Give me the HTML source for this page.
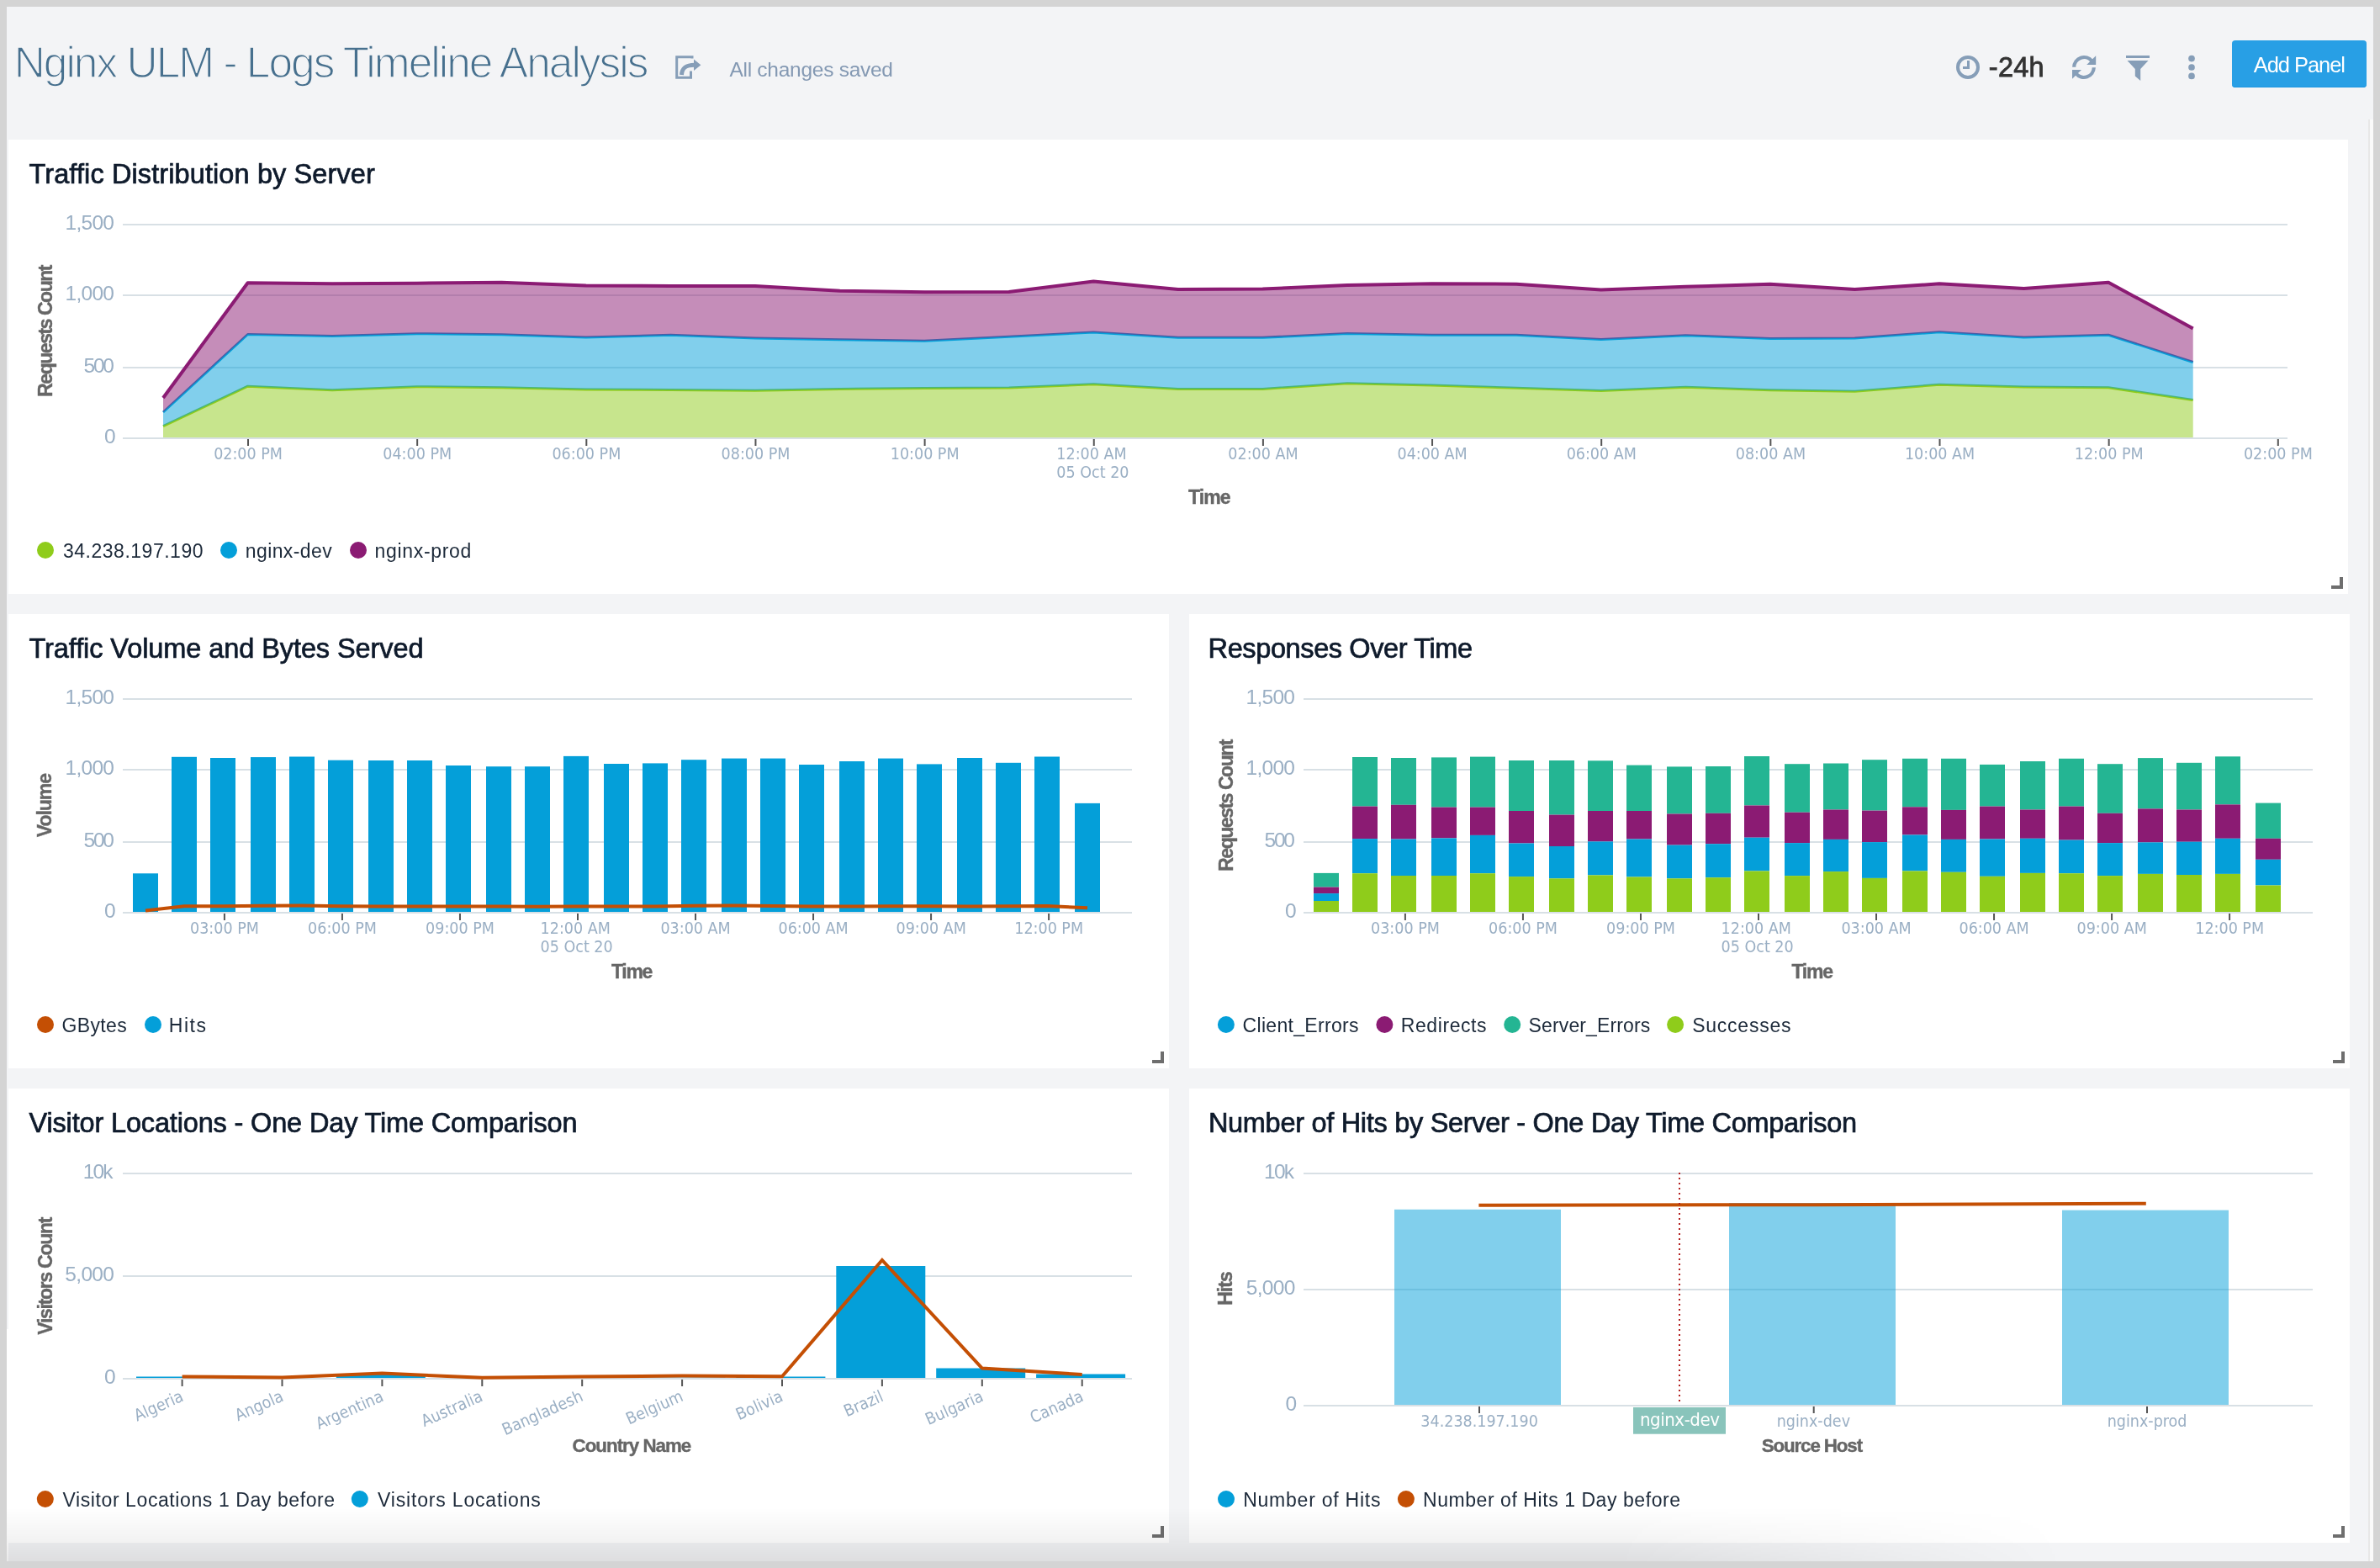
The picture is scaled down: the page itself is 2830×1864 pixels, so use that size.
<!DOCTYPE html>
<html lang="en"><head><meta charset="utf-8"><title>Nginx ULM - Logs Timeline Analysis</title>
<style>
html,body{margin:0;padding:0}
body{width:2830px;height:1864px;background:#d4d4d4;position:relative;overflow:hidden;font-family:"Liberation Sans", sans-serif}
#page{position:absolute;left:8px;top:8px;width:2814px;height:1848px;background:#f3f4f6}
.panel{position:absolute;background:#fff}
.rs{position:absolute;right:6px;bottom:6px;width:10px;height:10px;border-right:4px solid #6e6e6e;border-bottom:4px solid #6e6e6e}
.t{position:absolute;white-space:nowrap;line-height:1;display:block;font-variant-ligatures:none}
.d{font-family:"DejaVu Sans Condensed","DejaVu Sans","Liberation Sans",sans-serif;font-stretch:condensed}
#txt{position:absolute;left:0;top:0;width:2830px;height:1864px;will-change:transform}
#btn{position:absolute;left:2654px;top:48px;width:160px;height:56px;border-radius:4px;background:#289fe5;box-shadow:inset 0 -1px 0 #1d96e1}
#sb{position:absolute;left:2816px;top:142px;width:6px;height:1714px;background:#fafafa;border-left:2px solid #e8e8e8;box-sizing:border-box}
#fade{position:absolute;left:8px;top:1792px;width:2814px;height:64px;background:linear-gradient(to bottom,rgba(0,0,0,0) 0,rgba(0,0,0,.05) 42px,rgba(0,0,0,.085) 64px);-webkit-mask-image:linear-gradient(to right,#000 0,#000 68%,transparent 87%);mask-image:linear-gradient(to right,#000 0,#000 68%,transparent 87%);pointer-events:none}
#strip{position:absolute;left:8px;top:1580px;width:2px;height:276px;background:#fff}
svg{position:absolute;left:0;top:0}
</style></head><body>
<div id="page"></div>
<div id="strip"></div>
<div class="panel" style="left:10px;top:166px;width:2782px;height:540px"><i class="rs"></i></div><div class="panel" style="left:10px;top:730px;width:1380px;height:540px"><i class="rs"></i></div><div class="panel" style="left:1414px;top:730px;width:1380px;height:540px"><i class="rs"></i></div><div class="panel" style="left:10px;top:1294px;width:1380px;height:540px"><i class="rs"></i></div><div class="panel" style="left:1414px;top:1294px;width:1380px;height:540px"><i class="rs"></i></div>
<div id="sb"></div>
<div id="btn"></div>
<svg width="2830" height="1864" viewBox="0 0 2830 1864">
<rect x="146.00" y="266.00" width="2574.00" height="2.00" fill="#d8e0e5" />
<rect x="146.00" y="350.00" width="2574.00" height="2.00" fill="#d8e0e5" />
<rect x="146.00" y="436.00" width="2574.00" height="2.00" fill="#d8e0e5" />
<rect x="146.00" y="520.00" width="2574.00" height="2.00" fill="#d8e0e5" />
<polygon points="194.0,506.6 294.6,459.2 395.1,463.8 495.7,459.7 596.3,460.7 696.8,463.0 797.4,463.5 898.0,464.3 998.6,462.5 1099.1,461.5 1199.7,461.0 1300.3,456.8 1400.8,462.5 1501.4,462.5 1602.0,455.7 1702.5,458.0 1803.1,461.3 1903.7,464.6 2004.3,460.2 2104.8,463.8 2205.4,465.3 2306.0,457.2 2406.5,460.0 2507.1,460.7 2607.7,475.6 2607.7,520.0 2507.1,520.0 2406.5,520.0 2306.0,520.0 2205.4,520.0 2104.8,520.0 2004.3,520.0 1903.7,520.0 1803.1,520.0 1702.5,520.0 1602.0,520.0 1501.4,520.0 1400.8,520.0 1300.3,520.0 1199.7,520.0 1099.1,520.0 998.6,520.0 898.0,520.0 797.4,520.0 696.8,520.0 596.3,520.0 495.7,520.0 395.1,520.0 294.6,520.0 194.0,520.0" fill="#8fcc1b" fill-opacity="0.5"/>
<polyline points="194.0,506.6 294.6,459.2 395.1,463.8 495.7,459.7 596.3,460.7 696.8,463.0 797.4,463.5 898.0,464.3 998.6,462.5 1099.1,461.5 1199.7,461.0 1300.3,456.8 1400.8,462.5 1501.4,462.5 1602.0,455.7 1702.5,458.0 1803.1,461.3 1903.7,464.6 2004.3,460.2 2104.8,463.8 2205.4,465.3 2306.0,457.2 2406.5,460.0 2507.1,460.7 2607.7,475.6" fill="none" stroke="#8fcc1b" stroke-width="3" stroke-linejoin="round" />
<polygon points="194.0,490.0 294.6,397.5 395.1,399.5 495.7,396.7 596.3,397.7 696.8,401.0 797.4,398.2 898.0,402.0 998.6,403.8 1099.1,405.3 1199.7,400.2 1300.3,395.0 1400.8,401.3 1501.4,401.3 1602.0,396.5 1702.5,398.2 1803.1,398.2 1903.7,403.6 2004.3,398.7 2104.8,402.5 2205.4,402.0 2306.0,394.7 2406.5,401.0 2507.1,398.2 2607.7,430.5 2607.7,475.6 2507.1,460.7 2406.5,460.0 2306.0,457.2 2205.4,465.3 2104.8,463.8 2004.3,460.2 1903.7,464.6 1803.1,461.3 1702.5,458.0 1602.0,455.7 1501.4,462.5 1400.8,462.5 1300.3,456.8 1199.7,461.0 1099.1,461.5 998.6,462.5 898.0,464.3 797.4,463.5 696.8,463.0 596.3,460.7 495.7,459.7 395.1,463.8 294.6,459.2 194.0,506.6" fill="#049fd9" fill-opacity="0.5"/>
<polyline points="194.0,490.0 294.6,397.5 395.1,399.5 495.7,396.7 596.3,397.7 696.8,401.0 797.4,398.2 898.0,402.0 998.6,403.8 1099.1,405.3 1199.7,400.2 1300.3,395.0 1400.8,401.3 1501.4,401.3 1602.0,396.5 1702.5,398.2 1803.1,398.2 1903.7,403.6 2004.3,398.7 2104.8,402.5 2205.4,402.0 2306.0,394.7 2406.5,401.0 2507.1,398.2 2607.7,430.5" fill="none" stroke="#049fd9" stroke-width="3" stroke-linejoin="round" />
<polygon points="194.0,473.0 294.6,336.2 395.1,337.2 495.7,336.7 596.3,335.7 696.8,339.5 797.4,340.0 898.0,340.0 998.6,345.8 1099.1,347.3 1199.7,347.0 1300.3,334.5 1400.8,344.0 1501.4,343.5 1602.0,339.0 1702.5,337.2 1803.1,337.7 1903.7,344.6 2004.3,340.8 2104.8,337.7 2205.4,344.0 2306.0,337.3 2406.5,343.0 2507.1,335.7 2607.7,390.4 2607.7,430.5 2507.1,398.2 2406.5,401.0 2306.0,394.7 2205.4,402.0 2104.8,402.5 2004.3,398.7 1903.7,403.6 1803.1,398.2 1702.5,398.2 1602.0,396.5 1501.4,401.3 1400.8,401.3 1300.3,395.0 1199.7,400.2 1099.1,405.3 998.6,403.8 898.0,402.0 797.4,398.2 696.8,401.0 596.3,397.7 495.7,396.7 395.1,399.5 294.6,397.5 194.0,490.0" fill="#8b1b73" fill-opacity="0.5"/>
<polyline points="194.0,473.0 294.6,336.2 395.1,337.2 495.7,336.7 596.3,335.7 696.8,339.5 797.4,340.0 898.0,340.0 998.6,345.8 1099.1,347.3 1199.7,347.0 1300.3,334.5 1400.8,344.0 1501.4,343.5 1602.0,339.0 1702.5,337.2 1803.1,337.7 1903.7,344.6 2004.3,340.8 2104.8,337.7 2205.4,344.0 2306.0,337.3 2406.5,343.0 2507.1,335.7 2607.7,390.4" fill="none" stroke="#8b1b73" stroke-width="4" stroke-linejoin="round" />
<rect x="294.00" y="522.00" width="2.00" height="8.00" fill="#555" />
<rect x="495.15" y="522.00" width="2.00" height="8.00" fill="#555" />
<rect x="696.30" y="522.00" width="2.00" height="8.00" fill="#555" />
<rect x="897.45" y="522.00" width="2.00" height="8.00" fill="#555" />
<rect x="1098.60" y="522.00" width="2.00" height="8.00" fill="#555" />
<rect x="1299.75" y="522.00" width="2.00" height="8.00" fill="#555" />
<rect x="1500.90" y="522.00" width="2.00" height="8.00" fill="#555" />
<rect x="1702.05" y="522.00" width="2.00" height="8.00" fill="#555" />
<rect x="1903.20" y="522.00" width="2.00" height="8.00" fill="#555" />
<rect x="2104.35" y="522.00" width="2.00" height="8.00" fill="#555" />
<rect x="2305.50" y="522.00" width="2.00" height="8.00" fill="#555" />
<rect x="2506.65" y="522.00" width="2.00" height="8.00" fill="#555" />
<rect x="2707.80" y="522.00" width="2.00" height="8.00" fill="#555" />
<rect x="146.00" y="830.00" width="1200.00" height="2.00" fill="#d8e0e5" />
<rect x="146.00" y="914.00" width="1200.00" height="2.00" fill="#d8e0e5" />
<rect x="146.00" y="1000.00" width="1200.00" height="2.00" fill="#d8e0e5" />
<rect x="146.00" y="1084.00" width="1200.00" height="2.00" fill="#d8e0e5" />
<rect x="265.90" y="1086.00" width="2.00" height="8.00" fill="#555" />
<rect x="405.93" y="1086.00" width="2.00" height="8.00" fill="#555" />
<rect x="545.96" y="1086.00" width="2.00" height="8.00" fill="#555" />
<rect x="685.99" y="1086.00" width="2.00" height="8.00" fill="#555" />
<rect x="826.02" y="1086.00" width="2.00" height="8.00" fill="#555" />
<rect x="966.05" y="1086.00" width="2.00" height="8.00" fill="#555" />
<rect x="1106.08" y="1086.00" width="2.00" height="8.00" fill="#555" />
<rect x="1246.11" y="1086.00" width="2.00" height="8.00" fill="#555" />
<rect x="158.00" y="1038.30" width="30.00" height="45.70" fill="#049fd9" />
<rect x="204.00" y="899.80" width="30.00" height="184.20" fill="#049fd9" />
<rect x="250.00" y="901.00" width="30.00" height="183.00" fill="#049fd9" />
<rect x="298.00" y="900.10" width="30.00" height="183.90" fill="#049fd9" />
<rect x="344.00" y="899.50" width="30.00" height="184.50" fill="#049fd9" />
<rect x="390.00" y="903.70" width="30.00" height="180.30" fill="#049fd9" />
<rect x="438.00" y="904.00" width="30.00" height="180.00" fill="#049fd9" />
<rect x="484.00" y="904.00" width="30.00" height="180.00" fill="#049fd9" />
<rect x="530.00" y="910.00" width="30.00" height="174.00" fill="#049fd9" />
<rect x="578.00" y="911.20" width="30.00" height="172.80" fill="#049fd9" />
<rect x="624.00" y="911.20" width="30.00" height="172.80" fill="#049fd9" />
<rect x="670.00" y="898.90" width="30.00" height="185.10" fill="#049fd9" />
<rect x="718.00" y="908.00" width="30.00" height="176.00" fill="#049fd9" />
<rect x="764.00" y="907.40" width="30.00" height="176.60" fill="#049fd9" />
<rect x="810.00" y="903.20" width="30.00" height="180.80" fill="#049fd9" />
<rect x="858.00" y="901.60" width="30.00" height="182.40" fill="#049fd9" />
<rect x="904.00" y="901.60" width="30.00" height="182.40" fill="#049fd9" />
<rect x="950.00" y="909.00" width="30.00" height="175.00" fill="#049fd9" />
<rect x="998.00" y="905.00" width="30.00" height="179.00" fill="#049fd9" />
<rect x="1044.00" y="901.60" width="30.00" height="182.40" fill="#049fd9" />
<rect x="1090.00" y="908.40" width="30.00" height="175.60" fill="#049fd9" />
<rect x="1138.00" y="901.00" width="30.00" height="183.00" fill="#049fd9" />
<rect x="1184.00" y="906.80" width="30.00" height="177.20" fill="#049fd9" />
<rect x="1230.00" y="899.50" width="30.00" height="184.50" fill="#049fd9" />
<rect x="1278.00" y="954.90" width="30.00" height="129.10" fill="#049fd9" />
<polyline points="173.0,1082.4 219.0,1077.3 265.0,1077.3 313.0,1076.8 359.0,1076.6 405.0,1077.2 453.0,1077.5 499.0,1077.5 545.0,1077.6 593.0,1077.6 639.0,1077.8 685.0,1077.6 733.0,1077.6 779.0,1077.4 825.0,1076.8 873.0,1076.4 919.0,1077.0 965.0,1077.4 1013.0,1077.4 1059.0,1077.2 1105.0,1077.2 1153.0,1077.4 1199.0,1077.2 1245.0,1077.0 1293.0,1079.2" fill="none" stroke="#c44f04" stroke-width="4" stroke-linejoin="round" />
<rect x="1550.00" y="830.00" width="1200.00" height="2.00" fill="#d8e0e5" />
<rect x="1550.00" y="914.00" width="1200.00" height="2.00" fill="#d8e0e5" />
<rect x="1550.00" y="1000.00" width="1200.00" height="2.00" fill="#d8e0e5" />
<rect x="1550.00" y="1084.00" width="1200.00" height="2.00" fill="#d8e0e5" />
<rect x="1669.90" y="1086.00" width="2.00" height="8.00" fill="#555" />
<rect x="1809.93" y="1086.00" width="2.00" height="8.00" fill="#555" />
<rect x="1949.96" y="1086.00" width="2.00" height="8.00" fill="#555" />
<rect x="2089.99" y="1086.00" width="2.00" height="8.00" fill="#555" />
<rect x="2230.02" y="1086.00" width="2.00" height="8.00" fill="#555" />
<rect x="2370.05" y="1086.00" width="2.00" height="8.00" fill="#555" />
<rect x="2510.08" y="1086.00" width="2.00" height="8.00" fill="#555" />
<rect x="2650.11" y="1086.00" width="2.00" height="8.00" fill="#555" />
<rect x="1562.00" y="1037.90" width="30.00" height="16.70" fill="#24b593" />
<rect x="1562.00" y="1054.60" width="30.00" height="7.50" fill="#8b1b73" />
<rect x="1562.00" y="1062.10" width="30.00" height="8.90" fill="#049fd9" />
<rect x="1562.00" y="1071.00" width="30.00" height="13.00" fill="#8fcc1b" />
<rect x="1608.00" y="900.00" width="30.00" height="58.60" fill="#24b593" />
<rect x="1608.00" y="958.60" width="30.00" height="38.50" fill="#8b1b73" />
<rect x="1608.00" y="997.10" width="30.00" height="41.10" fill="#049fd9" />
<rect x="1608.00" y="1038.20" width="30.00" height="45.80" fill="#8fcc1b" />
<rect x="1654.00" y="901.00" width="30.00" height="55.80" fill="#24b593" />
<rect x="1654.00" y="956.80" width="30.00" height="40.70" fill="#8b1b73" />
<rect x="1654.00" y="997.50" width="30.00" height="43.50" fill="#049fd9" />
<rect x="1654.00" y="1041.00" width="30.00" height="43.00" fill="#8fcc1b" />
<rect x="1702.00" y="900.40" width="30.00" height="59.20" fill="#24b593" />
<rect x="1702.00" y="959.60" width="30.00" height="36.80" fill="#8b1b73" />
<rect x="1702.00" y="996.40" width="30.00" height="44.60" fill="#049fd9" />
<rect x="1702.00" y="1041.00" width="30.00" height="43.00" fill="#8fcc1b" />
<rect x="1748.00" y="899.60" width="30.00" height="60.00" fill="#24b593" />
<rect x="1748.00" y="959.60" width="30.00" height="33.30" fill="#8b1b73" />
<rect x="1748.00" y="992.90" width="30.00" height="45.30" fill="#049fd9" />
<rect x="1748.00" y="1038.20" width="30.00" height="45.80" fill="#8fcc1b" />
<rect x="1794.00" y="904.00" width="30.00" height="60.00" fill="#24b593" />
<rect x="1794.00" y="964.00" width="30.00" height="38.50" fill="#8b1b73" />
<rect x="1794.00" y="1002.50" width="30.00" height="39.60" fill="#049fd9" />
<rect x="1794.00" y="1042.10" width="30.00" height="41.90" fill="#8fcc1b" />
<rect x="1842.00" y="904.00" width="30.00" height="64.60" fill="#24b593" />
<rect x="1842.00" y="968.60" width="30.00" height="37.40" fill="#8b1b73" />
<rect x="1842.00" y="1006.00" width="30.00" height="38.30" fill="#049fd9" />
<rect x="1842.00" y="1044.30" width="30.00" height="39.70" fill="#8fcc1b" />
<rect x="1888.00" y="904.30" width="30.00" height="59.70" fill="#24b593" />
<rect x="1888.00" y="964.00" width="30.00" height="36.40" fill="#8b1b73" />
<rect x="1888.00" y="1000.40" width="30.00" height="40.00" fill="#049fd9" />
<rect x="1888.00" y="1040.40" width="30.00" height="43.60" fill="#8fcc1b" />
<rect x="1934.00" y="909.60" width="30.00" height="54.40" fill="#24b593" />
<rect x="1934.00" y="964.00" width="30.00" height="33.50" fill="#8b1b73" />
<rect x="1934.00" y="997.50" width="30.00" height="45.00" fill="#049fd9" />
<rect x="1934.00" y="1042.50" width="30.00" height="41.50" fill="#8fcc1b" />
<rect x="1982.00" y="911.40" width="30.00" height="56.10" fill="#24b593" />
<rect x="1982.00" y="967.50" width="30.00" height="37.10" fill="#8b1b73" />
<rect x="1982.00" y="1004.60" width="30.00" height="39.70" fill="#049fd9" />
<rect x="1982.00" y="1044.30" width="30.00" height="39.70" fill="#8fcc1b" />
<rect x="2028.00" y="911.00" width="30.00" height="55.80" fill="#24b593" />
<rect x="2028.00" y="966.80" width="30.00" height="36.40" fill="#8b1b73" />
<rect x="2028.00" y="1003.20" width="30.00" height="40.00" fill="#049fd9" />
<rect x="2028.00" y="1043.20" width="30.00" height="40.80" fill="#8fcc1b" />
<rect x="2074.00" y="899.00" width="30.00" height="58.50" fill="#24b593" />
<rect x="2074.00" y="957.50" width="30.00" height="38.20" fill="#8b1b73" />
<rect x="2074.00" y="995.70" width="30.00" height="39.70" fill="#049fd9" />
<rect x="2074.00" y="1035.40" width="30.00" height="48.60" fill="#8fcc1b" />
<rect x="2122.00" y="908.20" width="30.00" height="57.50" fill="#24b593" />
<rect x="2122.00" y="965.70" width="30.00" height="36.40" fill="#8b1b73" />
<rect x="2122.00" y="1002.10" width="30.00" height="39.00" fill="#049fd9" />
<rect x="2122.00" y="1041.10" width="30.00" height="42.90" fill="#8fcc1b" />
<rect x="2168.00" y="907.50" width="30.00" height="55.00" fill="#24b593" />
<rect x="2168.00" y="962.50" width="30.00" height="35.40" fill="#8b1b73" />
<rect x="2168.00" y="997.90" width="30.00" height="38.20" fill="#049fd9" />
<rect x="2168.00" y="1036.10" width="30.00" height="47.90" fill="#8fcc1b" />
<rect x="2214.00" y="903.20" width="30.00" height="60.40" fill="#24b593" />
<rect x="2214.00" y="963.60" width="30.00" height="37.50" fill="#8b1b73" />
<rect x="2214.00" y="1001.10" width="30.00" height="42.80" fill="#049fd9" />
<rect x="2214.00" y="1043.90" width="30.00" height="40.10" fill="#8fcc1b" />
<rect x="2262.00" y="901.80" width="30.00" height="57.50" fill="#24b593" />
<rect x="2262.00" y="959.30" width="30.00" height="33.20" fill="#8b1b73" />
<rect x="2262.00" y="992.50" width="30.00" height="42.90" fill="#049fd9" />
<rect x="2262.00" y="1035.40" width="30.00" height="48.60" fill="#8fcc1b" />
<rect x="2308.00" y="901.80" width="30.00" height="61.10" fill="#24b593" />
<rect x="2308.00" y="962.90" width="30.00" height="35.00" fill="#8b1b73" />
<rect x="2308.00" y="997.90" width="30.00" height="38.90" fill="#049fd9" />
<rect x="2308.00" y="1036.80" width="30.00" height="47.20" fill="#8fcc1b" />
<rect x="2354.00" y="908.90" width="30.00" height="49.70" fill="#24b593" />
<rect x="2354.00" y="958.60" width="30.00" height="38.90" fill="#8b1b73" />
<rect x="2354.00" y="997.50" width="30.00" height="44.30" fill="#049fd9" />
<rect x="2354.00" y="1041.80" width="30.00" height="42.20" fill="#8fcc1b" />
<rect x="2402.00" y="905.00" width="30.00" height="57.50" fill="#24b593" />
<rect x="2402.00" y="962.50" width="30.00" height="34.30" fill="#8b1b73" />
<rect x="2402.00" y="996.80" width="30.00" height="41.10" fill="#049fd9" />
<rect x="2402.00" y="1037.90" width="30.00" height="46.10" fill="#8fcc1b" />
<rect x="2448.00" y="901.80" width="30.00" height="56.80" fill="#24b593" />
<rect x="2448.00" y="958.60" width="30.00" height="40.00" fill="#8b1b73" />
<rect x="2448.00" y="998.60" width="30.00" height="39.60" fill="#049fd9" />
<rect x="2448.00" y="1038.20" width="30.00" height="45.80" fill="#8fcc1b" />
<rect x="2494.00" y="908.20" width="30.00" height="58.60" fill="#24b593" />
<rect x="2494.00" y="966.80" width="30.00" height="35.30" fill="#8b1b73" />
<rect x="2494.00" y="1002.10" width="30.00" height="39.00" fill="#049fd9" />
<rect x="2494.00" y="1041.10" width="30.00" height="42.90" fill="#8fcc1b" />
<rect x="2542.00" y="901.10" width="30.00" height="60.30" fill="#24b593" />
<rect x="2542.00" y="961.40" width="30.00" height="40.00" fill="#8b1b73" />
<rect x="2542.00" y="1001.40" width="30.00" height="37.50" fill="#049fd9" />
<rect x="2542.00" y="1038.90" width="30.00" height="45.10" fill="#8fcc1b" />
<rect x="2588.00" y="906.80" width="30.00" height="55.70" fill="#24b593" />
<rect x="2588.00" y="962.50" width="30.00" height="38.20" fill="#8b1b73" />
<rect x="2588.00" y="1000.70" width="30.00" height="39.30" fill="#049fd9" />
<rect x="2588.00" y="1040.00" width="30.00" height="44.00" fill="#8fcc1b" />
<rect x="2634.00" y="899.30" width="30.00" height="57.10" fill="#24b593" />
<rect x="2634.00" y="956.40" width="30.00" height="40.40" fill="#8b1b73" />
<rect x="2634.00" y="996.80" width="30.00" height="42.10" fill="#049fd9" />
<rect x="2634.00" y="1038.90" width="30.00" height="45.10" fill="#8fcc1b" />
<rect x="2682.00" y="954.60" width="30.00" height="42.20" fill="#24b593" />
<rect x="2682.00" y="996.80" width="30.00" height="25.00" fill="#8b1b73" />
<rect x="2682.00" y="1021.80" width="30.00" height="30.70" fill="#049fd9" />
<rect x="2682.00" y="1052.50" width="30.00" height="31.50" fill="#8fcc1b" />
<rect x="146.00" y="1394.00" width="1200.00" height="2.00" fill="#d8e0e5" />
<rect x="146.00" y="1516.00" width="1200.00" height="2.00" fill="#d8e0e5" />
<rect x="146.00" y="1638.00" width="1200.00" height="2.00" fill="#d8e0e5" />
<rect x="162.00" y="1636.50" width="106.00" height="1.50" fill="#049fd9" />
<rect x="399.80" y="1633.80" width="106.00" height="4.20" fill="#049fd9" />
<rect x="756.50" y="1637.60" width="106.00" height="0.40" fill="#049fd9" />
<rect x="875.40" y="1636.50" width="106.00" height="1.50" fill="#049fd9" />
<rect x="994.30" y="1505.00" width="106.00" height="133.00" fill="#049fd9" />
<rect x="1113.20" y="1626.50" width="106.00" height="11.50" fill="#049fd9" />
<rect x="1232.10" y="1633.50" width="106.00" height="4.50" fill="#049fd9" />
<polyline points="216.6,1636.6 335.5,1637.4 454.4,1632.6 573.3,1637.8 692.2,1636.6 811.1,1635.6 930.0,1636.2 1048.9,1498.0 1167.8,1626.5 1286.7,1634.0" fill="none" stroke="#c44f04" stroke-width="4" stroke-linejoin="miter"/>
<rect x="215.60" y="1640.00" width="2.00" height="8.00" fill="#555" />
<rect x="334.50" y="1640.00" width="2.00" height="8.00" fill="#555" />
<rect x="453.40" y="1640.00" width="2.00" height="8.00" fill="#555" />
<rect x="572.30" y="1640.00" width="2.00" height="8.00" fill="#555" />
<rect x="691.20" y="1640.00" width="2.00" height="8.00" fill="#555" />
<rect x="810.10" y="1640.00" width="2.00" height="8.00" fill="#555" />
<rect x="929.00" y="1640.00" width="2.00" height="8.00" fill="#555" />
<rect x="1047.90" y="1640.00" width="2.00" height="8.00" fill="#555" />
<rect x="1166.80" y="1640.00" width="2.00" height="8.00" fill="#555" />
<rect x="1285.70" y="1640.00" width="2.00" height="8.00" fill="#555" />
<rect x="1550.00" y="1394.00" width="1200.00" height="2.00" fill="#d8e0e5" />
<rect x="1550.00" y="1532.00" width="1200.00" height="2.00" fill="#d8e0e5" />
<rect x="1550.00" y="1670.00" width="1200.00" height="2.00" fill="#d8e0e5" />
<rect x="1658.00" y="1437.80" width="198.00" height="232.20" fill="#049fd9" fill-opacity="0.5"/>
<rect x="2056.00" y="1430.00" width="198.00" height="240.00" fill="#049fd9" fill-opacity="0.5"/>
<rect x="2452.00" y="1438.60" width="198.00" height="231.40" fill="#049fd9" fill-opacity="0.5"/>
<polyline points="1758.4,1432.7 2157,1432.2 2551.8,1430.7" fill="none" stroke="#c44f04" stroke-width="4"/>
<line x1="1997" y1="1394" x2="1997" y2="1667" stroke="#b3201f" stroke-width="2" stroke-dasharray="2 4"/>
<rect x="1758.00" y="1672.00" width="2.00" height="8.00" fill="#555" />
<rect x="2155.70" y="1672.00" width="2.00" height="8.00" fill="#555" />
<rect x="2552.00" y="1672.00" width="2.00" height="8.00" fill="#555" />
<rect x="1942.00" y="1673.00" width="110.00" height="31.70" fill="#89c4bb" />
<circle cx="54" cy="654" r="10" fill="#8fcc1b"/>
<circle cx="272" cy="654" r="10" fill="#049fd9"/>
<circle cx="426" cy="654" r="10" fill="#8b1b73"/>
<circle cx="54" cy="1218" r="10" fill="#c44f04"/>
<circle cx="182" cy="1218" r="10" fill="#049fd9"/>
<circle cx="1457.9" cy="1218" r="10" fill="#049fd9"/>
<circle cx="1646.4" cy="1218" r="10" fill="#8b1b73"/>
<circle cx="1798.2" cy="1218" r="10" fill="#24b593"/>
<circle cx="1992.1" cy="1218" r="10" fill="#8fcc1b"/>
<circle cx="53.8" cy="1782" r="10" fill="#c44f04"/>
<circle cx="427.8" cy="1782" r="10" fill="#049fd9"/>
<circle cx="1458" cy="1782" r="10" fill="#049fd9"/>
<circle cx="1671.9" cy="1782" r="10" fill="#c44f04"/>

<g fill="none" stroke="#869eb8" stroke-width="3">
<path d="M823,69.5 V67.7 H804.7 V92.3 H821.5 V84.5"/>
<path d="M810.5,89 C811,81 815,77.2 826,77.2" stroke-width="5"/>
</g>
<polygon points="825,70.4 833.4,77.2 825,84" fill="#869eb8"/>
<circle cx="2340" cy="80" r="12" fill="none" stroke="#869eb8" stroke-width="4"/>
<path d="M2340.5,72 V80.6 H2334" fill="none" stroke="#869eb8" stroke-width="3"/>
<g fill="none" stroke="#869eb8" stroke-width="4.2">
<path d="M2466.2,79.8 A11.9,11.9 0 0 1 2487.4,72.6"/>
<path d="M2489.8,80.2 A11.9,11.9 0 0 1 2468.6,87.4"/>
</g>
<polygon points="2492.2,66.2 2492.2,77 2481.2,77" fill="#869eb8"/>
<polygon points="2464,93.8 2464,83 2475,83" fill="#869eb8"/>
<rect x="2528" y="66" width="28" height="3" fill="#869eb8"/>
<polygon points="2529.5,72 2554.5,72 2545.2,82 2545.2,96 2538.8,90.6 2538.8,82" fill="#869eb8"/>
<circle cx="2606" cy="69.6" r="3.85" fill="#869eb8"/><circle cx="2606" cy="80" r="3.85" fill="#869eb8"/><circle cx="2606" cy="90.4" r="3.85" fill="#869eb8"/>

</svg>
<div id="txt">
<span class="t d" style="left:254.15px;top:529.72px;font-size:19.5px;color:#9aafc4;">02:00 PM</span>
<span class="t d" style="left:455.30px;top:529.72px;font-size:19.5px;color:#9aafc4;">04:00 PM</span>
<span class="t d" style="left:656.45px;top:529.72px;font-size:19.5px;color:#9aafc4;">06:00 PM</span>
<span class="t d" style="left:857.60px;top:529.72px;font-size:19.5px;color:#9aafc4;">08:00 PM</span>
<span class="t d" style="left:1058.75px;top:529.72px;font-size:19.5px;color:#9aafc4;">10:00 PM</span>
<span class="t d" style="left:1256.35px;top:529.72px;font-size:19.5px;color:#9aafc4;">12:00 AM</span>
<span class="t d" style="left:1256.35px;top:551.72px;font-size:19.5px;color:#9aafc4;">05 Oct 20</span>
<span class="t d" style="left:1460.34px;top:529.72px;font-size:19.5px;color:#9aafc4;">02:00 AM</span>
<span class="t d" style="left:1661.49px;top:529.72px;font-size:19.5px;color:#9aafc4;">04:00 AM</span>
<span class="t d" style="left:1862.64px;top:529.72px;font-size:19.5px;color:#9aafc4;">06:00 AM</span>
<span class="t d" style="left:2063.79px;top:529.72px;font-size:19.5px;color:#9aafc4;">08:00 AM</span>
<span class="t d" style="left:2264.94px;top:529.72px;font-size:19.5px;color:#9aafc4;">10:00 AM</span>
<span class="t d" style="left:2466.80px;top:529.72px;font-size:19.5px;color:#9aafc4;">12:00 PM</span>
<span class="t d" style="left:2667.95px;top:529.72px;font-size:19.5px;color:#9aafc4;">02:00 PM</span>
<span class="t" style="left:77.60px;top:253.16px;font-size:24.5px;color:#9aafc4;letter-spacing:-0.747px;">1,500</span>
<span class="t" style="left:77.60px;top:337.16px;font-size:24.5px;color:#9aafc4;letter-spacing:-0.747px;">1,000</span>
<span class="t" style="left:99.60px;top:423.16px;font-size:24.5px;color:#9aafc4;letter-spacing:-2.282px;">500</span>
<span class="t" style="left:124.10px;top:507.16px;font-size:24.5px;color:#9aafc4;">0</span>
<span class="t" style="left:-17.40px;top:373.23px;font-size:23px;color:#666666;font-weight:bold;letter-spacing:-1.468px;-webkit-text-stroke:0.4px #666666;transform-origin:79.30px 19.47px;transform:rotate(-90deg);">Requests Count</span>
<span class="t" style="left:1413.00px;top:579.83px;font-size:23px;color:#666666;font-weight:bold;letter-spacing:-0.930px;-webkit-text-stroke:0.4px #666666;">Time</span>
<span class="t" style="left:77.60px;top:817.16px;font-size:24.5px;color:#9aafc4;letter-spacing:-0.747px;">1,500</span>
<span class="t" style="left:77.60px;top:901.16px;font-size:24.5px;color:#9aafc4;letter-spacing:-0.747px;">1,000</span>
<span class="t" style="left:99.60px;top:987.16px;font-size:24.5px;color:#9aafc4;letter-spacing:-2.282px;">500</span>
<span class="t" style="left:124.10px;top:1071.16px;font-size:24.5px;color:#9aafc4;">0</span>
<span class="t d" style="left:226.05px;top:1093.72px;font-size:19.5px;color:#9aafc4;">03:00 PM</span>
<span class="t d" style="left:366.08px;top:1093.72px;font-size:19.5px;color:#9aafc4;">06:00 PM</span>
<span class="t d" style="left:506.11px;top:1093.72px;font-size:19.5px;color:#9aafc4;">09:00 PM</span>
<span class="t d" style="left:642.59px;top:1093.72px;font-size:19.5px;color:#9aafc4;">12:00 AM</span>
<span class="t d" style="left:642.59px;top:1115.72px;font-size:19.5px;color:#9aafc4;">05 Oct 20</span>
<span class="t d" style="left:785.46px;top:1093.72px;font-size:19.5px;color:#9aafc4;">03:00 AM</span>
<span class="t d" style="left:925.49px;top:1093.72px;font-size:19.5px;color:#9aafc4;">06:00 AM</span>
<span class="t d" style="left:1065.52px;top:1093.72px;font-size:19.5px;color:#9aafc4;">09:00 AM</span>
<span class="t d" style="left:1206.26px;top:1093.72px;font-size:19.5px;color:#9aafc4;">12:00 PM</span>
<span class="t" style="left:24.20px;top:937.63px;font-size:23px;color:#666666;font-weight:bold;letter-spacing:-1.037px;-webkit-text-stroke:0.4px #666666;transform-origin:37.70px 19.47px;transform:rotate(-90deg);">Volume</span>
<span class="t" style="left:727.00px;top:1143.83px;font-size:23px;color:#666666;font-weight:bold;letter-spacing:-1.297px;-webkit-text-stroke:0.4px #666666;">Time</span>
<span class="t" style="left:1481.60px;top:817.16px;font-size:24.5px;color:#9aafc4;letter-spacing:-0.747px;">1,500</span>
<span class="t" style="left:1481.60px;top:901.16px;font-size:24.5px;color:#9aafc4;letter-spacing:-0.747px;">1,000</span>
<span class="t" style="left:1503.60px;top:987.16px;font-size:24.5px;color:#9aafc4;letter-spacing:-2.282px;">500</span>
<span class="t" style="left:1528.10px;top:1071.16px;font-size:24.5px;color:#9aafc4;">0</span>
<span class="t d" style="left:1630.05px;top:1093.72px;font-size:19.5px;color:#9aafc4;">03:00 PM</span>
<span class="t d" style="left:1770.08px;top:1093.72px;font-size:19.5px;color:#9aafc4;">06:00 PM</span>
<span class="t d" style="left:1910.11px;top:1093.72px;font-size:19.5px;color:#9aafc4;">09:00 PM</span>
<span class="t d" style="left:2046.59px;top:1093.72px;font-size:19.5px;color:#9aafc4;">12:00 AM</span>
<span class="t d" style="left:2046.59px;top:1115.72px;font-size:19.5px;color:#9aafc4;">05 Oct 20</span>
<span class="t d" style="left:2189.46px;top:1093.72px;font-size:19.5px;color:#9aafc4;">03:00 AM</span>
<span class="t d" style="left:2329.49px;top:1093.72px;font-size:19.5px;color:#9aafc4;">06:00 AM</span>
<span class="t d" style="left:2469.52px;top:1093.72px;font-size:19.5px;color:#9aafc4;">09:00 AM</span>
<span class="t d" style="left:2610.26px;top:1093.72px;font-size:19.5px;color:#9aafc4;">12:00 PM</span>
<span class="t" style="left:1386.60px;top:937.23px;font-size:23px;color:#666666;font-weight:bold;letter-spacing:-1.468px;-webkit-text-stroke:0.4px #666666;transform-origin:79.30px 19.47px;transform:rotate(-90deg);">Requests Count</span>
<span class="t" style="left:2130.40px;top:1144.33px;font-size:23px;color:#666666;font-weight:bold;letter-spacing:-1.197px;-webkit-text-stroke:0.4px #666666;">Time</span>
<span class="t" style="left:98.70px;top:1381.16px;font-size:24.5px;color:#9aafc4;letter-spacing:-1.833px;">10k</span>
<span class="t" style="left:77.30px;top:1503.16px;font-size:24.5px;color:#9aafc4;letter-spacing:-0.672px;">5,000</span>
<span class="t" style="left:124.10px;top:1625.16px;font-size:24.5px;color:#9aafc4;">0</span>
<span class="t d" style="left:157.69px;top:1648.62px;font-size:19.5px;color:#9aafc4;transform-origin:60.91px 16.38px;transform:rotate(-24deg);">Algeria</span>
<span class="t d" style="left:277.62px;top:1648.62px;font-size:19.5px;color:#9aafc4;transform-origin:59.88px 16.38px;transform:rotate(-24deg);">Angola</span>
<span class="t d" style="left:371.60px;top:1648.62px;font-size:19.5px;color:#9aafc4;transform-origin:84.80px 16.38px;transform:rotate(-24deg);">Argentina</span>
<span class="t d" style="left:498.46px;top:1648.62px;font-size:19.5px;color:#9aafc4;transform-origin:76.84px 16.38px;transform:rotate(-24deg);">Australia</span>
<span class="t d" style="left:592.45px;top:1648.62px;font-size:19.5px;color:#9aafc4;transform-origin:101.75px 16.38px;transform:rotate(-24deg);">Bangladesh</span>
<span class="t d" style="left:742.25px;top:1648.62px;font-size:19.5px;color:#9aafc4;transform-origin:70.85px 16.38px;transform:rotate(-24deg);">Belgium</span>
<span class="t d" style="left:874.22px;top:1648.62px;font-size:19.5px;color:#9aafc4;transform-origin:57.78px 16.38px;transform:rotate(-24deg);">Bolivia</span>
<span class="t d" style="left:1002.82px;top:1648.62px;font-size:19.5px;color:#9aafc4;transform-origin:48.08px 16.38px;transform:rotate(-24deg);">Brazil</span>
<span class="t d" style="left:1097.78px;top:1648.62px;font-size:19.5px;color:#9aafc4;transform-origin:72.02px 16.38px;transform:rotate(-24deg);">Bulgaria</span>
<span class="t d" style="left:1222.68px;top:1648.62px;font-size:19.5px;color:#9aafc4;transform-origin:66.02px 16.38px;transform:rotate(-24deg);">Canada</span>
<span class="t" style="left:-8.30px;top:1496.73px;font-size:23px;color:#666666;font-weight:bold;letter-spacing:-1.285px;-webkit-text-stroke:0.4px #666666;transform-origin:70.20px 19.47px;transform:rotate(-90deg);">Visitors Count</span>
<span class="t" style="left:680.60px;top:1708.12px;font-size:22.3px;color:#666666;font-weight:bold;letter-spacing:-0.981px;-webkit-text-stroke:0.4px #666666;">Country Name</span>
<span class="t" style="left:1503.10px;top:1381.16px;font-size:24.5px;color:#9aafc4;letter-spacing:-1.833px;">10k</span>
<span class="t" style="left:1481.70px;top:1519.16px;font-size:24.5px;color:#9aafc4;letter-spacing:-0.672px;">5,000</span>
<span class="t" style="left:1528.50px;top:1657.16px;font-size:24.5px;color:#9aafc4;">0</span>
<span class="t d" style="left:1689.35px;top:1679.62px;font-size:19.5px;color:#9aafc4;">34.238.197.190</span>
<span class="t d" style="left:2112.74px;top:1679.62px;font-size:19.5px;color:#9aafc4;">nginx-dev</span>
<span class="t d" style="left:2505.69px;top:1679.62px;font-size:19.5px;color:#9aafc4;">nginx-prod</span>
<span class="t d" style="left:1950.00px;top:1676.72px;font-size:22px;color:#ffffff;letter-spacing:-0.447px;">nginx-dev</span>
<span class="t" style="left:1445.20px;top:1511.93px;font-size:23px;color:#666666;font-weight:bold;letter-spacing:-0.954px;-webkit-text-stroke:0.4px #666666;transform-origin:20.40px 19.47px;transform:rotate(-90deg);">Hits</span>
<span class="t" style="left:2094.70px;top:1708.12px;font-size:22.3px;color:#666666;font-weight:bold;letter-spacing:-1.092px;-webkit-text-stroke:0.4px #666666;">Source Host</span>
<span class="t" style="left:34.50px;top:190.79px;font-size:32.5px;color:#0e1a2b;letter-spacing:0.108px;-webkit-text-stroke:0.7px #0e1a2b;">Traffic Distribution by Server</span>
<span class="t" style="left:34.50px;top:754.79px;font-size:32.5px;color:#0e1a2b;letter-spacing:-0.081px;-webkit-text-stroke:0.7px #0e1a2b;">Traffic Volume and Bytes Served</span>
<span class="t" style="left:1436.60px;top:754.79px;font-size:32.5px;color:#0e1a2b;letter-spacing:-0.391px;-webkit-text-stroke:0.7px #0e1a2b;">Responses Over Time</span>
<span class="t" style="left:34.50px;top:1318.89px;font-size:32.5px;color:#0e1a2b;letter-spacing:-0.158px;-webkit-text-stroke:0.7px #0e1a2b;">Visitor Locations - One Day Time Comparison</span>
<span class="t" style="left:1436.90px;top:1318.89px;font-size:32.5px;color:#0e1a2b;letter-spacing:-0.296px;-webkit-text-stroke:0.7px #0e1a2b;">Number of Hits by Server - One Day Time Comparison</span>
<span class="t" style="left:75.00px;top:643.93px;font-size:23px;color:#1d2a3a;letter-spacing:0.508px;">34.238.197.190</span>
<span class="t" style="left:291.80px;top:643.93px;font-size:23px;color:#1d2a3a;letter-spacing:0.396px;">nginx-dev</span>
<span class="t" style="left:445.60px;top:643.93px;font-size:23px;color:#1d2a3a;letter-spacing:0.667px;">nginx-prod</span>
<span class="t" style="left:73.40px;top:1207.93px;font-size:23px;color:#1d2a3a;letter-spacing:0.396px;">GBytes</span>
<span class="t" style="left:200.80px;top:1207.93px;font-size:23px;color:#1d2a3a;letter-spacing:1.492px;">Hits</span>
<span class="t" style="left:1477.60px;top:1207.93px;font-size:23px;color:#1d2a3a;letter-spacing:0.307px;">Client_Errors</span>
<span class="t" style="left:1665.80px;top:1207.93px;font-size:23px;color:#1d2a3a;letter-spacing:0.580px;">Redirects</span>
<span class="t" style="left:1817.60px;top:1207.93px;font-size:23px;color:#1d2a3a;letter-spacing:0.129px;">Server_Errors</span>
<span class="t" style="left:2012.20px;top:1207.93px;font-size:23px;color:#1d2a3a;letter-spacing:0.760px;">Successes</span>
<span class="t" style="left:74.50px;top:1771.93px;font-size:23px;color:#1d2a3a;letter-spacing:0.592px;">Visitor Locations 1 Day before</span>
<span class="t" style="left:449.00px;top:1771.93px;font-size:23px;color:#1d2a3a;letter-spacing:0.821px;">Visitors Locations</span>
<span class="t" style="left:1478.20px;top:1771.93px;font-size:23px;color:#1d2a3a;letter-spacing:0.763px;">Number of Hits</span>
<span class="t" style="left:1692.00px;top:1771.93px;font-size:23px;color:#1d2a3a;letter-spacing:0.559px;">Number of Hits 1 Day before</span>
<span class="t" style="left:16.65px;top:49.04px;font-size:51.4px;color:#47708e;letter-spacing:-1.967px;-webkit-text-stroke:1.5px #f3f4f6;">Nginx ULM - Logs Timeline Analysis</span>
<span class="t" style="left:867.40px;top:70.96px;font-size:24.5px;color:#8499b3;letter-spacing:-0.265px;">All changes saved</span>
<span class="t" style="left:2364.80px;top:64.39px;font-size:32.5px;color:#333333;letter-spacing:0.271px;-webkit-text-stroke:0.8px #333333;">-24h</span>
<span class="t" style="left:2679.70px;top:64.51px;font-size:25.5px;color:#ffffff;letter-spacing:-1.053px;">Add Panel</span>
</div>
<div id="fade"></div>
</body></html>
